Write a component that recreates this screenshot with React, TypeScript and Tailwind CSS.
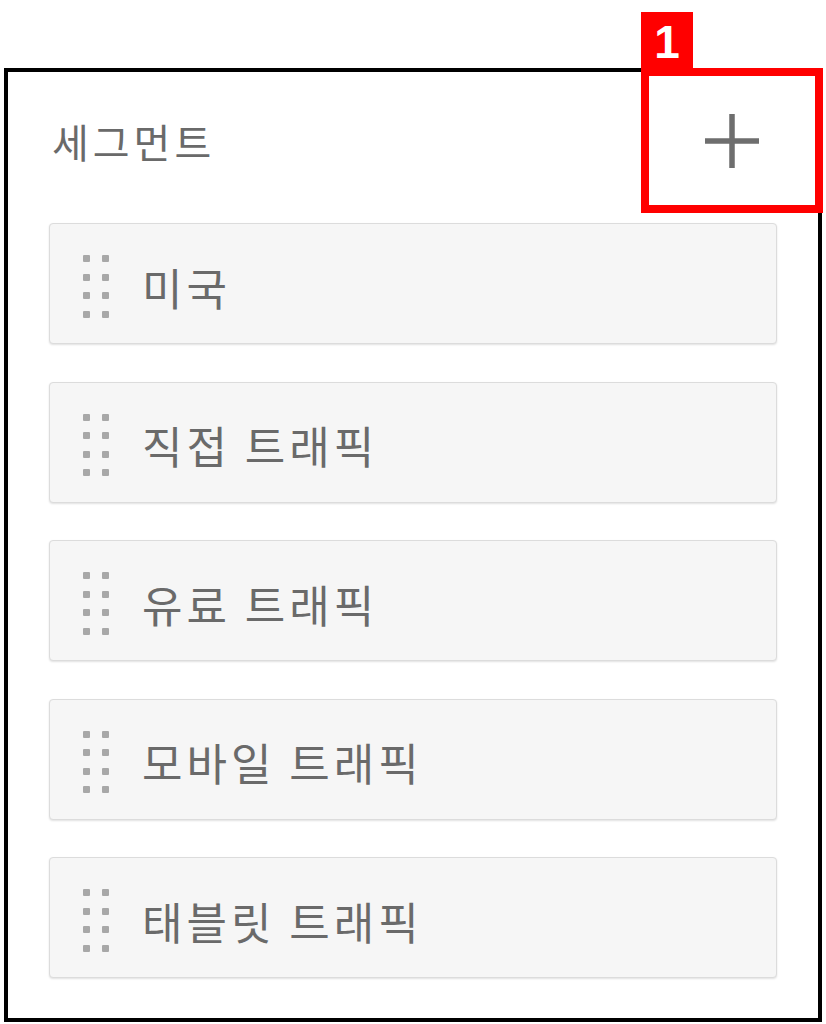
import React from "react";

const items = ["미국", "직접 트래픽", "유료 트래픽", "모바일 트래픽", "태블릿 트래픽"];

function DragHandle() {
  return (
    <div className="grid grid-cols-[7px_7px] gap-x-[12px] gap-y-[11.5px] shrink-0">
      {Array.from({ length: 8 }).map((_, i) => (
        <span key={i} className="block w-[7px] h-[7px] bg-[#a8a8a8] rounded-[1px]" />
      ))}
    </div>
  );
}

export default function App() {
  return (
    <div
      className="w-[826px] h-[1024px] bg-white pt-[68px] pl-[4px] overflow-hidden"
      style={{ fontFamily: '"Noto Sans CJK KR", "Noto Sans", sans-serif' }}
    >
      <div className="relative w-[818px] h-[954px] border-[4px] border-black flex flex-col">
        {/* header */}
        <div className="h-[138px] flex items-center justify-between shrink-0">
          <div className="pl-[44px] text-[40px] leading-none text-[#6a6a6a] tracking-[4px]">세그먼트</div>
          <button className="w-[166px] h-[129px] mr-[3px] flex items-center justify-center">
            <svg width="58" height="58" viewBox="0 0 58 58" fill="none">
              <path d="M29 2V56M2 29H56" stroke="#6e6e6e" strokeWidth="5.5" />
            </svg>
          </button>
        </div>

        {/* rows */}
        <div className="flex flex-col gap-[37.5px] pl-[41px] mt-[13px]">
          {items.map((t) => (
            <div
              key={t}
              className="w-[728px] h-[121px] bg-[#f6f6f6] border border-[#dcdcdc] rounded-[4px] shadow-[0_1px_2px_rgba(0,0,0,0.12)] flex items-center pl-[33px] gap-[33px]"
            >
              <div className="pt-[6px]">
                <DragHandle />
              </div>
              <span className="text-[44px] leading-none text-[#6a6a6a] pt-[6px] tracking-[4px]">{t}</span>
            </div>
          ))}
        </div>

        {/* annotation overlay */}
        <div className="absolute top-[-4px] right-[-5px] w-[182px] h-[145px] border-[8px] border-[#ff0000]" />
        <div
          className="absolute top-[-60px] right-[125px] w-[52px] h-[60px] bg-[#ff0000] flex items-center justify-center text-white font-bold text-[46px] leading-none"
          style={{ fontFamily: '"Liberation Sans", Arial, sans-serif' }}
        >
          1
        </div>
      </div>
    </div>
  );
}
